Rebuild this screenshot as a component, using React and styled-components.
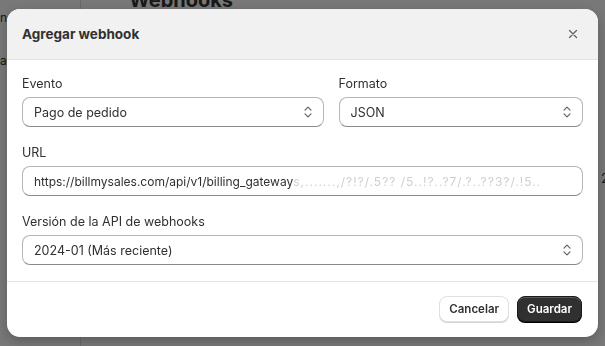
import React from "react";
import styled, { createGlobalStyle } from "styled-components";

const GlobalStyle = createGlobalStyle`
  html, body {
    margin: 0;
    padding: 0;
    width: 605px;
    height: 346px;
    overflow: hidden;
    font-family: Inter, "Noto Sans", "Liberation Sans", sans-serif;
    color: #303030;
    background: #f1f1f1;
  }
`;

//page behind the dialog:
const Page = styled.div`
  display: flex;
  width: 605px;
  height: 346px;
  background: #f1f1f1;
`;
const Side = styled.div`
  width: 80px;
  border-right: 1px solid #d4d4d4;
  padding: 10px 0 0 0;
  font-size: 12px;
  color: #303030;
  display: flex;
  flex-direction: column;
  gap: 28px;
`;
const Main = styled.div`
  flex: 1;
  padding-left: 48px;
  display: flex;
  flex-direction: column;
  h1 {
    margin: -12px 0 0;
    font-size: 20px;
    line-height: 24px;
    font-weight: 700;
  }
`;
const Count = styled.span`
  align-self: flex-end;
  margin-top: 158px;
  margin-right: -4px;
  font-size: 13px;
`;

//overlay + dialog:
const Overlay = styled.div`
  position: fixed;
  inset: 0;
  background: rgba(0, 0, 0, 0.5);
  padding: 9px 7px;
  display: flex;
  align-items: flex-start;
`;
const Modal = styled.div`
  width: 591px;
  background: #fff;
  border-radius: 13px;
  overflow: hidden;
  box-shadow: 0 4px 12px rgba(0, 0, 0, 0.25);
`;
const Header = styled.div`
  height: 51px;
  background: #f1f1f1;
  border-bottom: 1px solid #e3e3e3;
  display: flex;
  align-items: center;
  justify-content: space-between;
  padding: 0 19px 0 15px;
  box-sizing: border-box;
  h2 {
    margin: 0;
    font-size: 13.5px;
    font-weight: 650;
    color: #303030;
  }
`;
const Close = styled.button`
  border: none;
  background: none;
  padding: 0;
  width: 12px;
  height: 12px;
  display: flex;
  color: #616161;
  cursor: pointer;
`;
const Body = styled.div`
  padding: 14px 15px 16px;
  border-bottom: 1px solid #e3e3e3;
  display: flex;
  flex-direction: column;
  gap: 16px;
`;
const Row = styled.div`
  display: grid;
  grid-template-columns: 301fr 244fr;
  gap: 15px;
`;
const Field = styled.div`
  display: flex;
  flex-direction: column;
  gap: 3px;
`;
const Label = styled.label`
  font-size: 12.5px;
  line-height: 20px;
  color: #303030;
`;
const Box = styled.div`
  height: 30px;
  box-sizing: border-box;
  border: 1px solid #8a8a8a;
  border-color: #b5b5b5 #b5b5b5 #8a8a8a;
  border-radius: 8px;
  padding: 0 10px 0 11px;
  display: flex;
  align-items: center;
  justify-content: space-between;
  font-size: 12.5px;
  color: #303030;
  background: #fff;
  overflow: hidden;
  white-space: nowrap;
`;
const Url = styled.span`
  font-size: 12px;
  color: #303030;
  span {
    color: #cfcfcf;
    letter-spacing: 1px;
  }
`;
const Footer = styled.div`
  display: flex;
  justify-content: flex-end;
  gap: 8px;
  padding: 14px 16px 15px;
`;
const Button = styled.button`
  height: 26px;
  padding: 0 9px;
  border-radius: 8px;
  font-family: inherit;
  font-size: 11.5px;
  font-weight: 600;
  cursor: pointer;
  border: ${(p) => (p.$primary ? "1px solid #1a1a1a" : "1px solid #e0e0e0")};
  background: ${(p) => (p.$primary ? "#303030" : "#fff")};
  color: ${(p) => (p.$primary ? "#fff" : "#303030")};
  box-shadow: ${(p) =>
    p.$primary
      ? "inset 0 1px 0 rgba(255,255,255,0.2), 0 1px 0 #000"
      : "0 1px 0 #d4d4d4"};
`;

const Chevrons = () => (
  <svg width="10" height="14" viewBox="0 0 10 14" fill="none" stroke="#616161" strokeWidth="1.2" strokeLinecap="round" strokeLinejoin="round">
    <path d="M2 5.2 5 2.2 8 5.2" />
    <path d="M2 8.8 5 11.8 8 8.8" />
  </svg>
);

const Select = ({ children }) => (
  <Box>
    <span>{children}</span>
    <Chevrons />
  </Box>
);

const App = () => {
  return (
    <>
      <GlobalStyle />
      <Page>
        <Side>
          <span>n</span>
          <span>a</span>
        </Side>
        <Main>
          <h1>Webhooks</h1>
          <Count>2</Count>
        </Main>
      </Page>
      <Overlay>
        <Modal>
          <Header>
            <h2>Agregar webhook</h2>
            <Close aria-label="Cerrar">
              <svg width="12" height="12" viewBox="0 0 12 12" stroke="currentColor" strokeWidth="1.3" strokeLinecap="round">
                <path d="M2.5 2.5 9.5 9.5M9.5 2.5 2.5 9.5" />
              </svg>
            </Close>
          </Header>
          <Body>
            <Row>
              <Field>
                <Label>Evento</Label>
                <Select>Pago de pedido</Select>
              </Field>
              <Field>
                <Label>Formato</Label>
                <Select>JSON</Select>
              </Field>
            </Row>
            <Field>
              <Label>URL</Label>
              <Box>
                <Url>
                  https://billmysales.com/api/v1/billing_gateway
                  <span>s,.......,/?!?/.5?? /5..!?..?7/.?..??3?/.!5..</span>
                </Url>
              </Box>
            </Field>
            <Field>
              <Label>Versión de la API de webhooks</Label>
              <Select>2024-01 (Más reciente)</Select>
            </Field>
          </Body>
          <Footer>
            <Button>Cancelar</Button>
            <Button $primary>Guardar</Button>
          </Footer>
        </Modal>
      </Overlay>
    </>
  );
};

export default App;
